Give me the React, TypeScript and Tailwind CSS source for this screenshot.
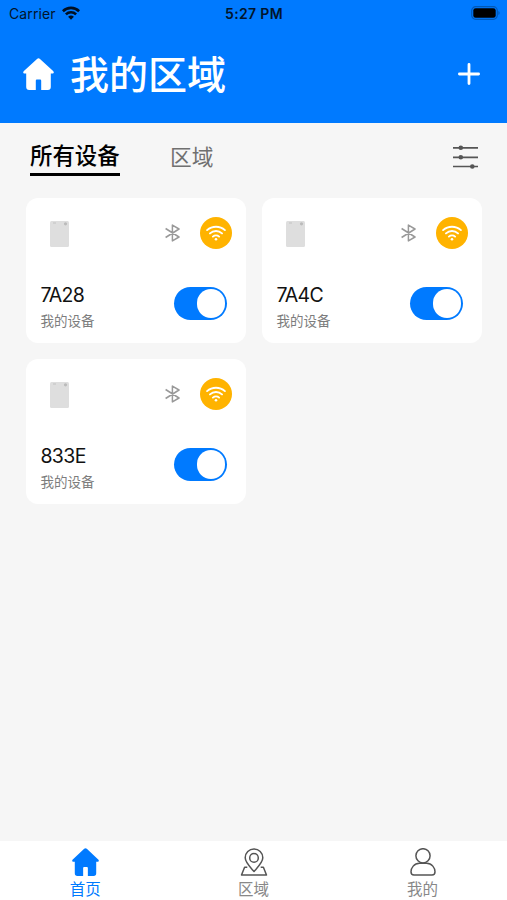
import React from 'react';

const devices = [
  { id: '7A28', place: '我的设备' },
  { id: '7A4C', place: '我的设备' },
  { id: '833E', place: '我的设备' },
];

const HomeIcon: React.FC<{ className?: string }> = ({ className }) => (
  <svg viewBox="0 0 31 32" fill="currentColor" className={className}>
    <path d="M14 .9a2.2 2.2 0 0 1 3 0L30.100 13.100c1.300 1.300.6 2.500-.8 2.500h-1.500V29a3 3 0 0 1-3 3h-6.600v-9c0-.9-.5-1.400-1.400-1.400h-2.600c-.9 0-1.400.5-1.400 1.400V32H6.200a3 3 0 0 1-3-3V15.600H1.700c-1.400 0-2.100-1.200-.8-2.500z" />
  </svg>
);

const StatusBar = () => (
  <div className="grid h-[27px] grid-cols-3 items-center pl-[9px] pr-[7px] text-[14px] leading-[27px] text-[#02152c]">
    <div className="flex items-center gap-[6.500px]">
      <span className="tracking-[0.1px]">Carrier</span>
      <svg viewBox="0 0 18 14" className="-mt-[2px] h-[14px] w-[18px]" fill="none" stroke="#001022" strokeWidth="2.600">
        <path d="M.9 5.200a11.600 11.600 0 0 1 16.200 0M3.900 8.400a7.300 7.300 0 0 1 10.200 0" />
        <path d="M9 13.700 6.100 10.800a4.200 4.200 0 0 1 5.800 0z" fill="#001022" stroke="none" />
      </svg>
    </div>
    <span className="-ml-[1px] whitespace-nowrap text-center font-semibold tracking-[0.35px]">5:27 PM</span>
    <svg viewBox="0 0 29 14" className="-mt-[1px] h-[14px] w-[29px] justify-self-end">
      <rect x=".7" y=".7" width="25.600" height="12.600" rx="4" fill="none" stroke="#0059b8" strokeWidth="1.200" />
      <rect x="2.300" y="2.300" width="22.400" height="9.400" rx="2.300" fill="#000" />
      <path d="M27.400 5c1.600.7 1.600 3.300 0 4z" fill="#0059b8" />
    </svg>
  </div>
);

const Header = () => (
  <header className="h-[123px] bg-[#007aff]">
    <StatusBar />
    <div className="flex h-[96px] items-center pl-[23px] pr-[27px] text-white">
      <HomeIcon className="mt-[-2px] h-[32px] w-[31px]" />
      <h1 className="-mt-[1px] ml-[16px] text-[39px] font-medium leading-[48px]">我的区域</h1>
      <svg viewBox="0 0 22 22" className="ml-auto mt-[-3px] h-[22px] w-[22px]" stroke="currentColor" strokeWidth="2.800" strokeLinecap="round">
        <path d="M11 1.400v19.200M1.400 11h19.200" />
      </svg>
    </div>
  </header>
);

const Tabs = () => (
  <div className="flex h-[75px] items-start pl-[30px] pr-[29px] pt-[16px]">
    <button className="h-[37px] w-[90px] whitespace-nowrap border-b-[3px] border-black text-left text-[22.400px] font-medium leading-[32px] text-black">所有设备</button>
    <button className="ml-[50px] text-[21.700px] leading-[36px] text-[#707070]">区域</button>
    <svg viewBox="0 0 25 24" className="ml-auto mt-[6px] h-[24px] w-[25px]" stroke="#555" strokeWidth="1.700">
      <path d="M0 2.800h25M0 12.300h25M0 21.500h25" />
      <g fill="#555" stroke="none">
        <circle cx="7.800" cy="2.800" r="2.300" />
        <circle cx="7.800" cy="12.300" r="2.300" />
        <circle cx="19.300" cy="21.500" r="2.300" />
      </g>
    </svg>
  </div>
);

const DeviceCard: React.FC<{ id: string; place: string }> = ({ id, place }) => (
  <div className="h-[145px] rounded-[12px] bg-white pl-[14.400px] pr-[14.400px] pt-[19px]">
    <div className="flex h-[32px] items-center pl-[10px]">
      <svg viewBox="0 0 19 26" className="mt-[2px] h-[26px] w-[19px]">
        <rect width="19" height="26" rx="1.500" fill="#dedede" />
        <circle cx="15.500" cy="2.800" r="1.600" fill="#bbb" />
        <path d="M3 2h3" stroke="#c2c2c2" />
      </svg>
      <svg viewBox="0 0 15 18" className="ml-auto h-[18px] w-[15px]" fill="none" stroke="#999" strokeWidth="1.500" strokeLinejoin="round">
        <path d="m.6 4.500 13.400 8.500-6.600 3.900V1.100L14 5 .6 13.500" />
      </svg>
      <div className="ml-[20.500px] flex h-[32px] w-[32px] items-center justify-center rounded-full bg-[#ffb300]">
        <svg viewBox="0 0 20 16" className="h-[16px] w-[20px]" fill="none" stroke="#fff" strokeWidth="1.900" strokeLinecap="round">
          <path d="M1.100 5.100a13.300 13.300 0 0 1 17.800 0M4 8.400a8.800 8.800 0 0 1 12 0M6.900 11.600a4.600 4.600 0 0 1 6.200 0" />
          <circle cx="10" cy="14.300" r="1.300" fill="#fff" stroke="none" />
        </svg>
      </div>
    </div>
    <div className="mt-[34px] flex items-start justify-between pr-[5px]">
      <div>
        <div className="text-[19.500px] leading-[24px] tracking-[-0.6px] text-[#111]">{id}</div>
        <div className="mt-[4px] text-[13.500px] leading-[20px] text-[#7d7d7d]">{place}</div>
      </div>
      <div className="mt-[4px] flex h-[32.500px] w-[53px] items-center justify-end rounded-full bg-[#007aff] pr-[1.800px]">
        <span className="h-[28.500px] w-[28.500px] rounded-full bg-white" />
      </div>
    </div>
  </div>
);

const BottomNav = () => (
  <nav className="grid h-[59px] grid-cols-3 bg-white text-[15.500px] leading-[22px] text-[#888]">
    <div className="flex flex-col items-center pl-[1.500px] pt-[7px] text-[#007aff]">
      <HomeIcon className="h-[28px] w-[27px]" />
      <span className="mt-[3px]">首页</span>
    </div>
    <div className="flex flex-col items-center pt-[7px]">
      <svg viewBox="0 0 28 28" className="h-[28px] w-[28px]" fill="none" stroke="#555" strokeWidth="1.500" strokeLinejoin="round">
        <path d="M14 23.500C11 20 5.200 14.500 5.200 9.800a8.800 8.800 0 0 1 17.600 0c0 4.700-5.800 10.200-8.800 13.700z" />
        <circle cx="14" cy="9.900" r="4.300" />
        <path d="M7.300 19.200H4.600L1.500 27h25l-3.100-7.800h-2.700" />
      </svg>
      <span className="mt-[3px]">区域</span>
    </div>
    <div className="flex flex-col items-center pt-[7px]">
      <svg viewBox="0 0 28 28" className="h-[28px] w-[28px]" fill="none" stroke="#555" strokeWidth="1.500">
        <circle cx="14" cy="7.800" r="7.100" />
        <path d="M10.500 15.300h7.200c5.300 0 8.300 4.700 8.300 8.500 0 2.100-1 3.300-3 3.300H5c-2 0-3-1.200-3-3.300 0-3.800 3-8.500 8.500-8.500z" />
      </svg>
      <span className="mt-[3px]">我的</span>
    </div>
  </nav>
);

export default function App() {
  return (
    <div className="flex h-[900px] w-[507px] flex-col overflow-hidden bg-[#f6f6f6] font-['Inter','Noto_Sans_CJK_SC',sans-serif]">
      <Header />
      <main className="flex-1">
        <Tabs />
        <div className="grid grid-cols-2 gap-x-[15.600px] gap-y-[16px] pl-[26px] pr-[24.600px]">
          {devices.map((device) => (
            <DeviceCard key={device.id} {...device} />
          ))}
        </div>
      </main>
      <BottomNav />
    </div>
  );
}
